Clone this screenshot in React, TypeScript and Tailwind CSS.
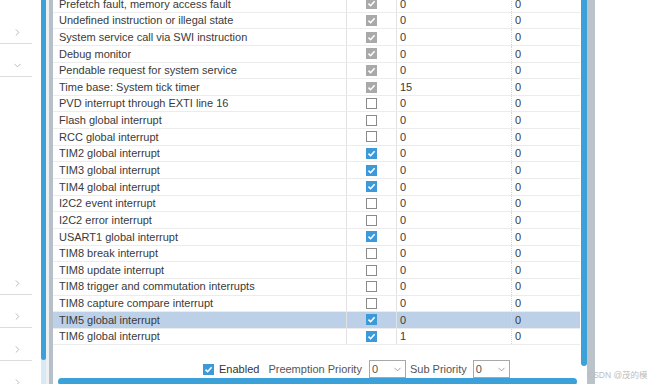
import React from 'react';
import { ChevronDown, ChevronRight } from 'lucide-react';

type Row = { name: string; state: 'locked' | 'on' | 'off'; pre: string; sub: string; selected?: boolean };

const rows: Row[] = [
  { name: 'Prefetch fault, memory access fault', state: 'locked', pre: '0', sub: '0' },
  { name: 'Undefined instruction or illegal state', state: 'locked', pre: '0', sub: '0' },
  { name: 'System service call via SWI instruction', state: 'locked', pre: '0', sub: '0' },
  { name: 'Debug monitor', state: 'locked', pre: '0', sub: '0' },
  { name: 'Pendable request for system service', state: 'locked', pre: '0', sub: '0' },
  { name: 'Time base: System tick timer', state: 'locked', pre: '15', sub: '0' },
  { name: 'PVD interrupt through EXTI line 16', state: 'off', pre: '0', sub: '0' },
  { name: 'Flash global interrupt', state: 'off', pre: '0', sub: '0' },
  { name: 'RCC global interrupt', state: 'off', pre: '0', sub: '0' },
  { name: 'TIM2 global interrupt', state: 'on', pre: '0', sub: '0' },
  { name: 'TIM3 global interrupt', state: 'on', pre: '0', sub: '0' },
  { name: 'TIM4 global interrupt', state: 'on', pre: '0', sub: '0' },
  { name: 'I2C2 event interrupt', state: 'off', pre: '0', sub: '0' },
  { name: 'I2C2 error interrupt', state: 'off', pre: '0', sub: '0' },
  { name: 'USART1 global interrupt', state: 'on', pre: '0', sub: '0' },
  { name: 'TIM8 break interrupt', state: 'off', pre: '0', sub: '0' },
  { name: 'TIM8 update interrupt', state: 'off', pre: '0', sub: '0' },
  { name: 'TIM8 trigger and commutation interrupts', state: 'off', pre: '0', sub: '0' },
  { name: 'TIM8 capture compare interrupt', state: 'off', pre: '0', sub: '0' },
  { name: 'TIM5 global interrupt', state: 'on', pre: '0', sub: '0', selected: true },
  { name: 'TIM6 global interrupt', state: 'on', pre: '1', sub: '0' }
];

function Check({ state }: { state: Row['state'] }) {
  if (state === 'off') return <div className="w-[11px] h-[11px] border border-[#8a8a8a] bg-white" />;
  const bg = state === 'locked' ? 'bg-[#a9a9a9]' : 'bg-[#3d9ad8]';
  return (
    <div className={`w-[11px] h-[11px] ${bg} flex items-center justify-center`}>
      <svg width="9" height="9" viewBox="0 0 9 9">
        <path d="M1.5 4.6 L3.6 6.7 L7.6 2.2" stroke="white" strokeWidth="1.6" fill="none" />
      </svg>
    </div>
  );
}

function SideItem({ down }: { down?: boolean }) {
  return (
    <div className="w-[32px] h-[33px] shrink-0 border-b border-[#dcdcdc] flex items-start justify-center pt-[16px] pl-[2px]">
      {down ? (
        <ChevronDown size={11} color="#9a9a9a" strokeWidth={1.5} />
      ) : (
        <ChevronRight size={11} color="#9a9a9a" strokeWidth={1.5} />
      )}
    </div>
  );
}

function Select() {
  return (
    <div className="w-[37px] h-[18px] border border-[#a8a8a8] bg-white flex items-center justify-between px-[2px]">
      <span>0</span>
      <ChevronDown size={11} color="#777" strokeWidth={1.5} />
    </div>
  );
}

export default function App() {
  return (
    <div
      className="relative w-[650px] h-[384px] bg-white flex overflow-hidden text-[11px] text-[#3a3a3a]"
      style={{ fontFamily: '"Liberation Sans", Arial, sans-serif' }}
    >
      {/* left navigator */}
      <div className="w-[41px] shrink-0 flex flex-col overflow-hidden">
        <div className="h-[11px] shrink-0" />
        <SideItem />
        <SideItem down />
        <div className="h-[185px] shrink-0" />
        <SideItem />
        <SideItem />
        <SideItem />
        <SideItem />
      </div>

      {/* left scroll */}
      <div className="w-[5px] shrink-0 bg-[#d6e9f5] flex flex-col">
        <div className="h-[360px] bg-[#3da1d9] rounded-b-[3px]" />
      </div>
      <div className="w-[3px] shrink-0 bg-[#eef1f3]" />
      <div className="w-[4px] shrink-0 bg-[#b7c0c8]" />

      {/* table area */}
      <div className="w-[527px] shrink-0 flex flex-col">
        <div className="-mt-[4px]">
          {rows.map((r) => (
            <div
              key={r.name}
              className={`h-[16.65px] flex border-b border-[#ececec] ${r.selected ? 'bg-[#bcd1e7]' : ''}`}
            >
              <div className="w-[294px] pl-[6px] flex items-center border-r border-[#e2e2e2] whitespace-nowrap">
                {r.name}
              </div>
              <div className="w-[50px] flex items-center justify-center border-r border-[#e2e2e2]">
                <Check state={r.state} />
              </div>
              <div className="w-[115px] pl-[3px] flex items-center border-r border-dotted border-[#e0d2c8]">
                {r.pre}
              </div>
              <div className="flex-1 pl-[3px] flex items-center">{r.sub}</div>
            </div>
          ))}
        </div>
        <div className="mt-[15px] flex items-center pl-[150px] text-[#555]">
          <div className="w-[11px] h-[11px] bg-[#3d9ad8] flex items-center justify-center">
            <svg width="9" height="9" viewBox="0 0 9 9">
              <path d="M1.5 4.6 L3.6 6.7 L7.6 2.2" stroke="white" strokeWidth="1.6" fill="none" />
            </svg>
          </div>
          <span className="ml-[5px] text-[#333]">Enabled</span>
          <span className="ml-[9px]">Preemption Priority</span>
          <div className="ml-[7px]"><Select /></div>
          <span className="ml-[4px]">Sub Priority</span>
          <div className="ml-[6px]"><Select /></div>
        </div>
        <div className="flex-1" />
        <div className="ml-[5px] w-[519px] h-[7px] bg-[#3da1d9] rounded-[4px] mb-[-1px]" />
      </div>

      {/* right scroll */}
      <div className="w-[1px] shrink-0" />
      <div className="w-[6px] shrink-0 flex flex-col">
        <div className="h-[366px] bg-[#3da1d9] rounded-b-[3px]" />
      </div>
      <div className="w-[8px] shrink-0 bg-[#bac2ca]" />
      <div className="flex-1" />

      {/* watermark */}
      <span
        className="absolute left-[587px] top-[369px] text-[8.5px] text-[#bdbdbd] whitespace-nowrap"
        style={{ fontFamily: '"Liberation Sans", "Noto Sans CJK SC", sans-serif' }}
      >
        CSDN @茂的模
      </span>
    </div>
  );
}
